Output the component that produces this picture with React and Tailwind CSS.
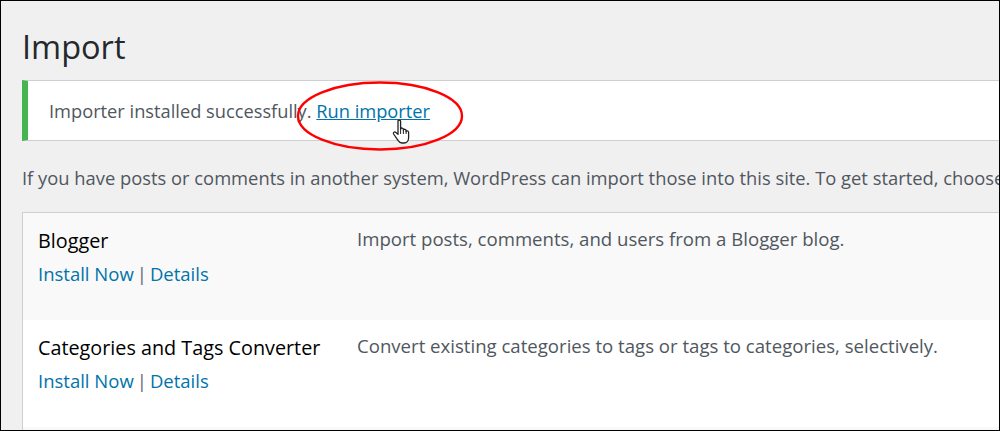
const font = "font-['Open_Sans','Noto_Sans',sans-serif]";

function Row({ name, desc, bg }) {
  return (
    <div className={`flex h-[107px] w-[1100px] ${bg}`}>
      <div className="w-[334px] shrink-0 pl-[15px] pt-[13px]">
        <div className="text-[19.8px] leading-[30px] text-black">{name}</div>
        <div className="mt-[3px] flex text-[18.5px] leading-[30px] text-[#646970]">
          <a className="text-[#0073aa]">Install Now</a>
          <span className="mx-[3px]">|</span>
          <a className="text-[#0073aa]">Details</a>
        </div>
      </div>
      <div className="pt-[11px] text-[18.6px] leading-[30px] text-[#50575e]">{desc}</div>
    </div>
  );
}

export default function App() {
  return (
    <div className={`relative h-[431px] w-[1000px] overflow-hidden border border-black bg-[#f0f0f1] pl-[21px] pt-[26px] ${font}`}>
      <h1 className="text-[32.5px] leading-[40px] text-[#23282d]">Import</h1>

      <div className="mt-[13px] flex h-[61px] w-[1100px] items-center border border-l-[6px] border-[#ccd0d4] border-l-[#46b450] bg-white pl-[21px] pt-[1px] text-[18.25px] text-[#50575e]">
        Importer installed successfully.&nbsp;<a className="text-[#0073aa] underline">Run importer</a>
      </div>

      <p className="mt-[22px] whitespace-nowrap text-[18.35px] leading-[30px] text-[#50575e]">
        If you have posts or comments in another system, WordPress can import those into this site. To get started, choose an importer below.
      </p>

      <div className="mt-[19px] w-[1100px] border border-[#ccd0d4]">
        <Row name="Blogger" desc="Import posts, comments, and users from a Blogger blog." bg="bg-[#f9f9f9]" />
        <Row name="Categories and Tags Converter" desc="Convert existing categories to tags or tags to categories, selectively." bg="bg-white" />
        <div className="h-[40px] bg-[#f9f9f9]" />
      </div>

      <svg className="absolute left-[295px] top-[79px]" width="170" height="72" viewBox="0 0 170 72" fill="none">
        <ellipse cx="84" cy="36" rx="82" ry="33.5" stroke="#ff0000" strokeWidth="2.4" />
      </svg>
      <svg className="absolute left-[391px] top-[118px]" width="22" height="26" viewBox="0 0 22 26">
        <path
          d="M6 2.2c0-1.5 2.6-1.5 2.6 0V10c.4-1.4 2.7-1.3 2.8.3v.9c.3-1.4 2.6-1.2 2.7.4v1c.4-1.2 2.4-1 2.5.6v5.6c0 2.6-1.6 5.2-4.6 5.2H10c-2 0-3-1-4-2.6L1.6 15c-.9-1.5 1-2.8 2.3-1.6L6 15.4z"
          fill="#fff"
          stroke="#222"
          strokeWidth="1.3"
          strokeLinejoin="round"
        />
        <path d="M8.6 10v5M11.4 11v4M14.1 12v3" stroke="#222" strokeWidth="1" />
      </svg>
    </div>
  );
}
